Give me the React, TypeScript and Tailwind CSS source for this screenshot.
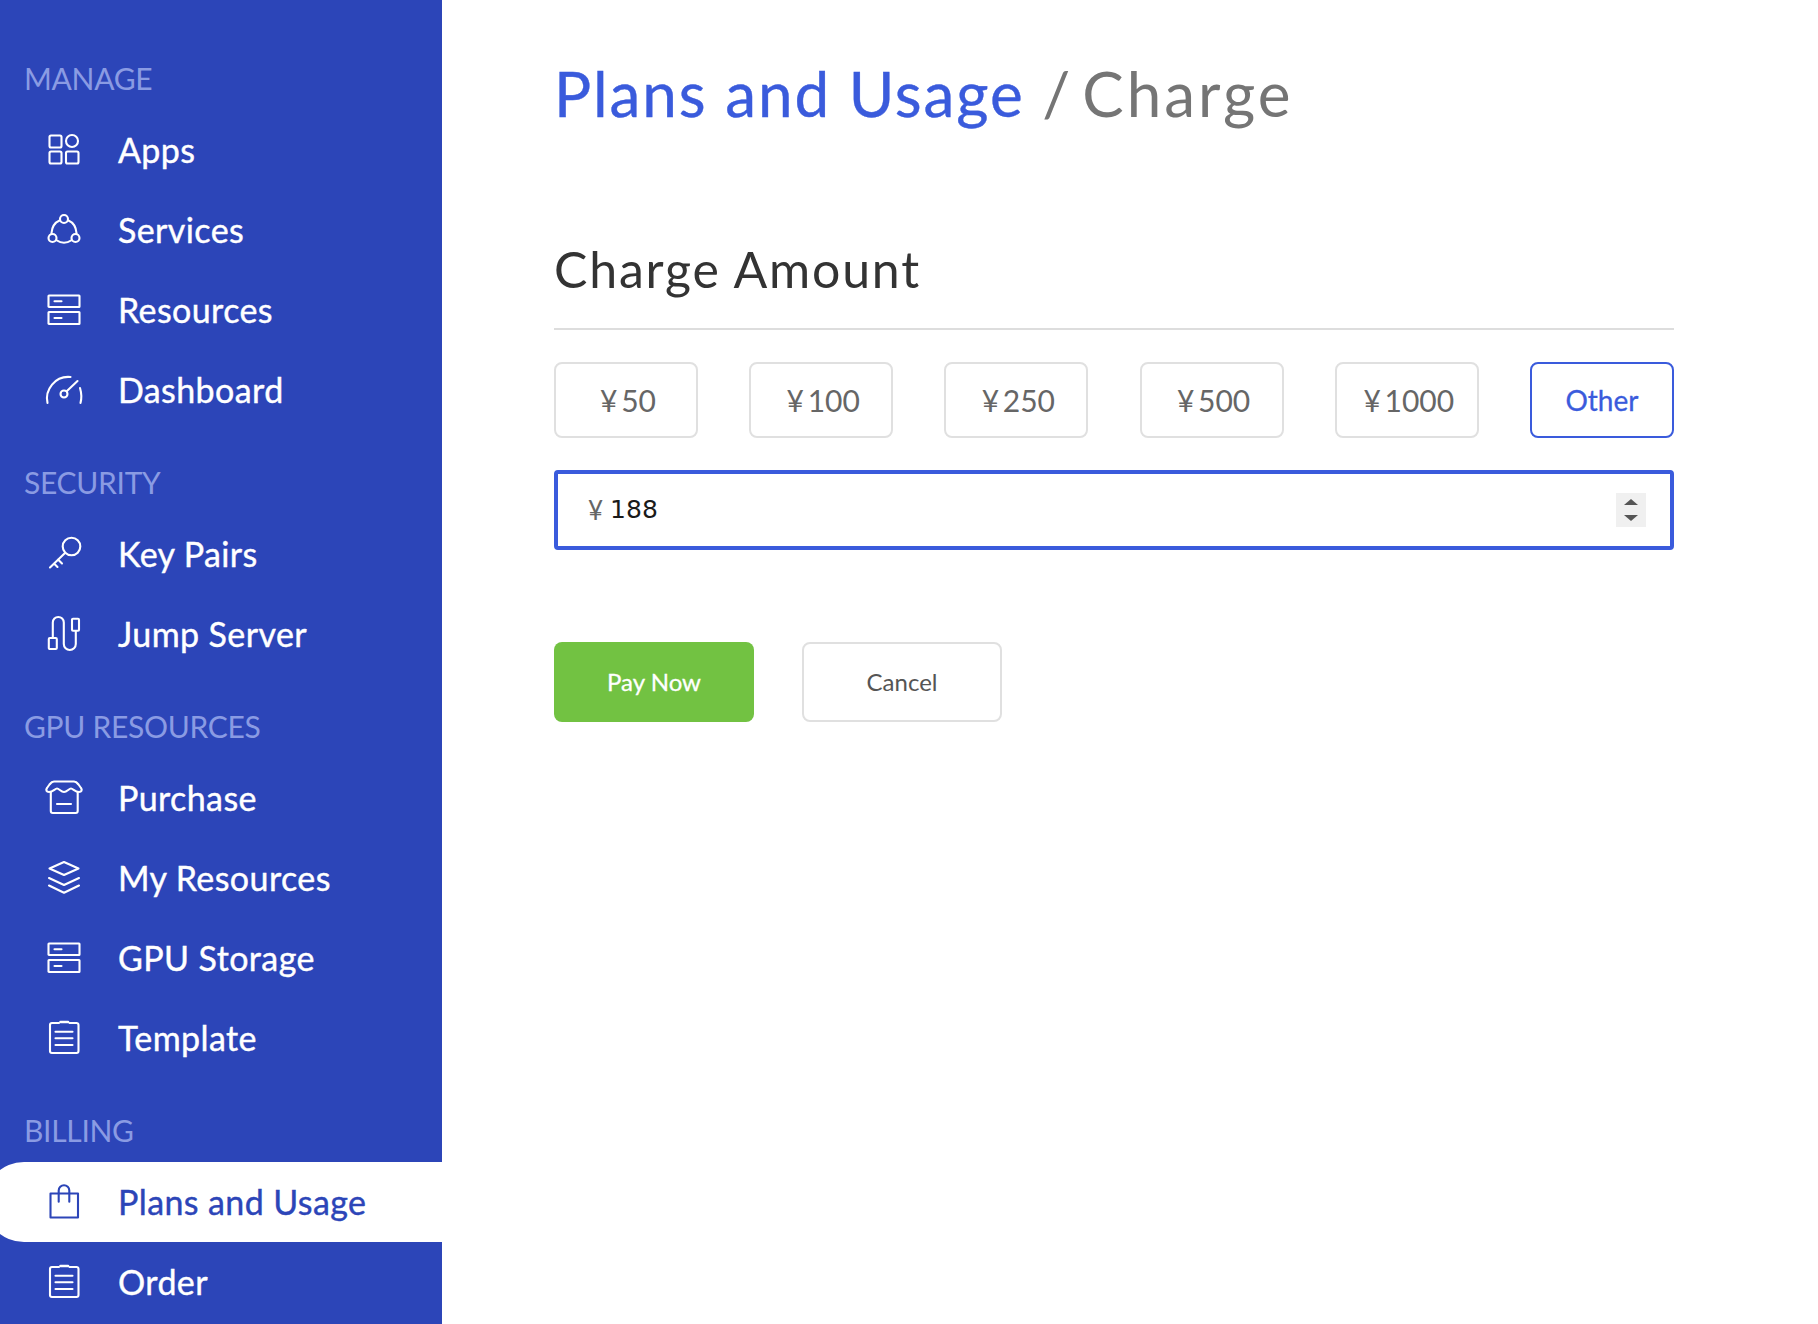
const font = "font-['Lato','Liberation_Sans',sans-serif]";

function Icon({ children }: { children: React.ReactNode }) {
  return (
    <svg
      viewBox="0 0 40 40"
      fill="none"
      stroke="currentColor"
      strokeWidth="2.1"
      strokeLinecap="round"
      strokeLinejoin="round"
      className="h-10 w-10 shrink-0"
    >
      {children}
    </svg>
  );
}

const Apps = () => (
  <Icon>
    <rect x="5.5" y="5.5" width="12" height="12" rx="1.5" />
    <circle cx="28" cy="11" r="6" />
    <rect x="5.5" y="21.5" width="12" height="12" rx="1.5" />
    <rect x="22" y="21.5" width="12.5" height="12" rx="1.5" />
  </Icon>
);

const Services = () => (
  <Icon>
    <circle cx="20" cy="9" r="4" />
    <circle cx="8.5" cy="28" r="4" />
    <circle cx="31.5" cy="28" r="4" />
    <path d="M15.5 10.5C11 12.5 8 17 7.5 23" />
    <path d="M24.5 10.5C29 12.5 32 17 32.5 23" />
    <path d="M13 30.5C17 33.5 23 33.5 27 30.5" />
  </Icon>
);

const Storage = () => (
  <Icon>
    <rect x="4.5" y="5.5" width="31" height="11.5" rx="0.5" />
    <rect x="4.5" y="22" width="31" height="12" rx="0.5" />
    <path d="M10.5 11.2H17.5M10.5 28H17.5" />
  </Icon>
);

const Gauge = () => (
  <Icon>
    <path d="M3.5 33C0.5 20 11 5.5 26.5 7" />
    <path d="M36 18C37.5 23 37.8 28 36.5 33" />
    <circle cx="20" cy="24" r="3.5" />
    <path d="M22.7 21.2L33.5 11" />
  </Icon>
);

const KeyIcon = () => (
  <Icon>
    <circle cx="27.5" cy="12.5" r="8.8" />
    <path d="M21 19L6 33.5M10 29.5L13.5 33M14 25.5L18 29.5" />
  </Icon>
);

const Jump = () => (
  <Icon>
    <rect x="4.8" y="24" width="8" height="11" rx="1" />
    <rect x="28" y="4.8" width="7" height="12" rx="1" />
    <path d="M8.8 24V8.5a5.5 5.5 0 0 1 11 0V30a6 6 0 0 0 12 0V17" />
  </Icon>
);

const Store = () => (
  <Icon>
    <path d="M10 3.5H30C32 3.5 33 4.5 34.5 6.5L37 10C38.5 12 37.5 14 35 14C31 14 29 10.5 27 10.5C25 10.5 23 14 20 14C17 14 15 10.5 13 10.5C11 10.5 9 14 5 14C2.5 14 1.5 12 3 10L5.5 6.5C7 4.5 8 3.5 10 3.5Z" />
    <path d="M6.8 14V33a2 2 0 0 0 2 2H31.7a2 2 0 0 0 2-2V14" />
    <path d="M13 26H27" />
  </Icon>
);

const Layers = () => (
  <Icon>
    <path d="M20 4L34.5 10.5L20 17L5.5 10.5Z" />
    <path d="M5 20L20 27L35 20" />
    <path d="M5 27.5L20 34.7L35 27.5" />
  </Icon>
);

const Clipboard = () => (
  <Icon>
    <path d="M15 5H8a2 2 0 0 0-2 2V33a2 2 0 0 0 2 2H32.5a2 2 0 0 0 2-2V7a2 2 0 0 0-2-2H25.5" />
    <path d="M16.5 4H24" strokeWidth="2.6" />
    <path d="M11.5 13.7H28.5M11.5 20.3H28.5M11.5 27H28.5" />
  </Icon>
);

const Bag = () => (
  <Icon>
    <path d="M6.5 11.5H34V35.5H6.5Z" />
    <path d="M14.7 19.7V8.5a5.3 5.3 0 0 1 10.6 0V19.7" />
  </Icon>
);

const sections = [
  {
    title: "MANAGE",
    items: [
      { label: "Apps", icon: <Apps /> },
      { label: "Services", icon: <Services /> },
      { label: "Resources", icon: <Storage /> },
      { label: "Dashboard", icon: <Gauge /> },
    ],
  },
  {
    title: "SECURITY",
    items: [
      { label: "Key Pairs", icon: <KeyIcon /> },
      { label: "Jump Server", icon: <Jump /> },
    ],
  },
  {
    title: "GPU RESOURCES",
    items: [
      { label: "Purchase", icon: <Store /> },
      { label: "My Resources", icon: <Layers /> },
      { label: "GPU Storage", icon: <Storage /> },
      { label: "Template", icon: <Clipboard /> },
    ],
  },
  {
    title: "BILLING",
    items: [
      { label: "Plans and Usage", icon: <Bag />, active: true },
      { label: "Order", icon: <Clipboard /> },
    ],
  },
];

const amounts = ["50", "100", "250", "500", "1000"];

export default function App() {
  return (
    <div className={`flex h-[1324px] overflow-hidden bg-white ${font}`}>
      <aside className="w-[442px] shrink-0 overflow-hidden bg-[#2c45b8] pt-[58px]">
        {sections.map((section) => (
          <div key={section.title} className="mb-[32px]">
            <div className="mb-[12px] h-[40px] pl-[24px] text-[30px] leading-[40px] tracking-[-0.3px] text-[#8a9be3]">
              {section.title}
            </div>
            <div>
              {section.items.map((item) => (
                <div
                  key={item.label}
                  className={`flex h-[80px] items-center gap-[34px] text-[34px] tracking-[0.4px] [-webkit-text-stroke:0.4px_currentColor] ${
                    item.active
                      ? "-ml-[16px] rounded-l-[40px] bg-white pl-[60px] text-[#2c45b8]"
                      : "pl-[44px] text-white"
                  }`}
                >
                  {item.icon}
                  <span className="mb-[2px]">{item.label}</span>
                </div>
              ))}
            </div>
          </div>
        ))}
      </aside>

      <main className="flex-1 pl-[112px] pt-[48px]">
        <div className="w-[1120px]">
          <h1 className="h-[90px] text-[62px] leading-[90px] tracking-[1.9px] text-[#3a5bdc] [-webkit-text-stroke:0.4px_currentColor]">
            Plans and Usage{" "}
            <span className="tracking-[3px] text-[#757575] [word-spacing:-10px] [-webkit-text-stroke:0]">/ Charge</span>
          </h1>
          <h2 className="mt-[96px] border-b-2 border-[#dddddd] pb-[24px] text-[50px] font-normal leading-[70px] tracking-[1.8px] text-[#333333]">
            Charge Amount
          </h2>
          <div className="mt-[32px] flex justify-between">
            {amounts.map((amount) => (
              <button
                key={amount}
                className="h-[76px] w-[144px] rounded-[8px] border-2 border-[#e0e0e0] pl-[4px] text-[30px] text-[#666666] [word-spacing:-4px]"
              >
                ¥ {amount}
              </button>
            ))}
            <button className="h-[76px] w-[144px] rounded-[8px] border-2 border-[#3a5bdc] text-[28px] text-[#3a5bdc] [-webkit-text-stroke:0.3px_currentColor]">
              Other
            </button>
          </div>
          <div className="mt-[32px] flex h-[80px] items-center justify-between rounded-[4px] border-[4px] border-[#3a5bdc] pl-[30px] pr-[24px]">
            <div className="flex items-center gap-[7px]">
              <span className="text-[26px] text-[#666666]">¥</span>
              <span className="font-['DejaVu_Sans',sans-serif] text-[25px] text-[#1a1a1a]">188</span>
            </div>
            <svg viewBox="0 0 30 34" className="h-[34px] w-[30px] bg-[#f0f0f0]">
              <path d="M15 6L22 12H8Z" fill="#555555" />
              <path d="M8 22H22L15 28Z" fill="#555555" />
            </svg>
          </div>
          <div className="mt-[92px] flex gap-[48px]">
            <button className="h-[80px] w-[200px] rounded-[8px] bg-[#72c242] text-[24px] text-white [-webkit-text-stroke:0.3px_currentColor]">
              Pay Now
            </button>
            <button className="h-[80px] w-[200px] rounded-[8px] border-2 border-[#e0e0e0] text-[24px] text-[#555555]">
              Cancel
            </button>
          </div>
        </div>
      </main>
    </div>
  );
}
